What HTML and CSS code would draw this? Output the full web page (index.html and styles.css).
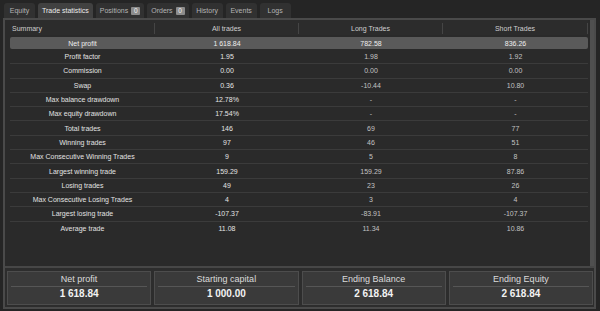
FILE: index.html
```html
<!DOCTYPE html>
<html>
<head>
<meta charset="utf-8">
<link rel="stylesheet" href="styles.css">
</head>
<body>
<div class="tabs">
  <div class="tab">Equity</div>
  <div class="tab active">Trade statistics</div>
  <div class="tab">Positions <span class="badge">0</span></div>
  <div class="tab">Orders <span class="badge">0</span></div>
  <div class="tab">History</div>
  <div class="tab">Events</div>
  <div class="tab">Logs</div>
</div>
<div class="frame">
  <div class="stats">
    <div class="table">
      <div class="head">
        <div class="hc left">Summary</div>
        <div class="hc">All trades</div>
        <div class="hc">Long Trades</div>
        <div class="hc">Short Trades</div>
      </div>
      <div class="row hl"><div class="lbl">Net profit</div><div class="all">1 618.84</div><div class="v">782.58</div><div class="v">836.26</div></div>
      <div class="row"><div class="lbl">Profit factor</div><div class="all">1.95</div><div class="v">1.98</div><div class="v">1.92</div></div>
      <div class="row"><div class="lbl">Commission</div><div class="all">0.00</div><div class="v">0.00</div><div class="v">0.00</div></div>
      <div class="row"><div class="lbl">Swap</div><div class="all">0.36</div><div class="v">-10.44</div><div class="v">10.80</div></div>
      <div class="row"><div class="lbl">Max balance drawdown</div><div class="all">12.78%</div><div class="v">-</div><div class="v">-</div></div>
      <div class="row"><div class="lbl">Max equity drawdown</div><div class="all">17.54%</div><div class="v">-</div><div class="v">-</div></div>
      <div class="row"><div class="lbl">Total trades</div><div class="all">146</div><div class="v">69</div><div class="v">77</div></div>
      <div class="row"><div class="lbl">Winning trades</div><div class="all">97</div><div class="v">46</div><div class="v">51</div></div>
      <div class="row"><div class="lbl">Max Consecutive Winning Trades</div><div class="all">9</div><div class="v">5</div><div class="v">8</div></div>
      <div class="row"><div class="lbl">Largest winning trade</div><div class="all">159.29</div><div class="v">159.29</div><div class="v">87.86</div></div>
      <div class="row"><div class="lbl">Losing trades</div><div class="all">49</div><div class="v">23</div><div class="v">26</div></div>
      <div class="row"><div class="lbl">Max Consecutive Losing Trades</div><div class="all">4</div><div class="v">3</div><div class="v">4</div></div>
      <div class="row"><div class="lbl">Largest losing trade</div><div class="all">-107.37</div><div class="v">-83.91</div><div class="v">-107.37</div></div>
      <div class="row last"><div class="lbl">Average trade</div><div class="all">11.08</div><div class="v">11.34</div><div class="v">10.86</div></div>
    </div>
    <div class="scroll"></div>
  </div>
  <div class="cards">
    <div class="card"><div class="clbl">Net profit</div><div class="cval">1 618.84</div></div>
    <div class="card"><div class="clbl">Starting capital</div><div class="cval">1 000.00</div></div>
    <div class="card"><div class="clbl">Ending Balance</div><div class="cval">2 618.84</div></div>
    <div class="card"><div class="clbl">Ending Equity</div><div class="cval">2 618.84</div></div>
  </div>
</div>
</body>
</html>
```
FILE: styles.css
```css
* { box-sizing: border-box; }
html, body { margin: 0; padding: 0; }
body {
  width: 600px;
  height: 311px;
  overflow: hidden;
  background: #252525;
  font-family: "Liberation Sans", Arial, sans-serif;
  color: #d6d6d6;
}
.tabs {
  display: flex;
  gap: 3px;
  padding: 3px 0 0 4px;
  height: 18px;
}
.tab {
  min-width: 31px;
  height: 15px;
  padding: 0 4px;
  background: #313131;
  color: #b4b4b4;
  font-size: 7px;
  display: flex;
  align-items: center;
  justify-content: center;
  gap: 3px;
  border-radius: 3px 3px 0 0;
}
.tab.active {
  background: #414141;
  color: #ececec;
}
.badge {
  display: inline-flex;
  align-items: center;
  justify-content: center;
  width: 9px;
  height: 8px;
  background: #8c8c8c;
  color: #f4f4f4;
  font-size: 6.5px;
  border-radius: 1px;
}
.frame {
  margin: 0 4px 0 3px;
  height: 291px;
  border: 2px solid #4a4a4a;
  background: #2a2a2a;
  display: flex;
  flex-direction: column;
}
.stats {
  flex: 1;
  display: flex;
  padding: 0 0 0 5px;
  border-bottom: 2px solid #474747;
}
.table {
  width: 578px;
  font-size: 7px;
}
.scroll {
  width: 4px;
  margin-left: 2px;
  background: #4f4f4f;
}
.head {
  display: grid;
  grid-template-columns: 145px 144px 144px 145px;
  height: 15px;
  background: #2c2c2c;
}
.hc {
  margin: 3px 0 1px;
  border-right: 1px solid #454545;
  display: flex;
  align-items: center;
  justify-content: center;
  color: #cfcfcf;
}
.hc.left { justify-content: flex-start; padding-left: 2px; }
.row {
  display: grid;
  grid-template-columns: 145px 144px 144px 145px;
  height: 14.3px;
  border-bottom: 1px solid #3b3b3b;
  align-items: center;
  text-align: center;
}
.row.hl {
  height: 12px;
  margin: 2px 0 1px;
  border-bottom: none;
  background: #5a5a5a;
  border-radius: 2px;
}
.row.last { border-bottom: none; }
.lbl { color: #e2e2e2; }
.all { color: #e4e4e4; }
.v { color: #c2c2c2; }
.row.hl .lbl, .row.hl .all, .row.hl .v { color: #eeeeee; }
.cards {
  height: 39px;
  display: flex;
  gap: 3px;
  padding: 3px 1px 2px 2px;
  background: #2d2d2d;
}
.card {
  flex: 1;
  border: 1px solid #4d4d4d;
  background: #3a3a3a;
  display: flex;
  flex-direction: column;
}
.clbl {
  height: 15px;
  margin: 0 3px;
  border-bottom: 1px solid #565656;
  display: flex;
  align-items: center;
  justify-content: center;
  font-size: 9px;
  color: #dadada;
}
.cval {
  height: 12px;
  display: flex;
  align-items: center;
  justify-content: center;
  font-size: 10px;
  font-weight: bold;
  color: #f2f2f2;
}
```
